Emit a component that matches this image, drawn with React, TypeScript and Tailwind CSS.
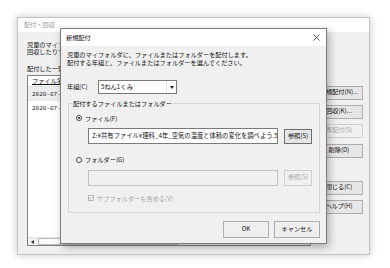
const jp = "font-['Noto_Sans_CJK_JP',sans-serif]";

function WinButton({ label, disabled = false, className = "" }: { label: string; disabled?: boolean; className?: string }) {
  return (
    <div
      className={`flex items-center justify-center whitespace-nowrap border text-[6.2px] leading-none ${
        disabled ? "border-[#cfcfcf] bg-[#f0f0f0] text-[#a8a8a8]" : "border-[#adadad] bg-[#e6e6e6] text-[#111]"
      } ${className}`}
    >
      {label}
    </div>
  );
}

function Radio({ checked, label }: { checked: boolean; label: string }) {
  return (
    <div className="flex h-[7.5px] items-center gap-[3px]">
      <span className="flex h-[6px] w-[6px] items-center justify-center rounded-full border border-[#444] bg-white">
        {checked && <span className="h-[2px] w-[2px] rounded-full bg-[#111]" />}
      </span>
      <span className="text-[6.2px] leading-[7.5px] text-[#111]">{label}</span>
    </div>
  );
}

function ParentWindow() {
  const buttons: { label: string; disabled?: boolean; gap?: string }[] = [
    { label: "新規配付(N)..." },
    { label: "回収(K)...", gap: "mt-[5px]" },
    { label: "再配付(S)", disabled: true, gap: "mt-[5px]" },
    { label: "削除(D)", gap: "mt-[6px]" },
    { label: "閉じる(C)", gap: "mt-[23px]" },
    { label: "ヘルプ(H)", gap: "mt-[5px]" },
  ];

  return (
    <div className="absolute left-[17px] top-[17px] flex h-[238px] w-[353px] flex-col border border-[#c4c4c4] bg-[#f0f0f0] shadow-[0_0_8px_rgba(0,0,0,0.22)]">
      <div className="flex h-[14px] items-center bg-white pl-[6px] text-[6.2px] text-[#9a9a9a]">配付・回収</div>
      <div className="flex flex-1 pl-[9px] pr-[6px] pt-[8.5px]">
        <div className="flex w-[284px] flex-col">
          {/* only the part left of the dialog is ever visible */}
          <div className="w-[33px] overflow-hidden text-[6.2px] leading-[7.5px] text-[#111]">
            <div className="whitespace-nowrap">児童のマイフォルダに</div>
            <div className="whitespace-nowrap">回収したりすることが</div>
          </div>
          <div className="mt-[9px] w-[33px] overflow-hidden whitespace-nowrap text-[6.2px] leading-[7.5px] text-[#111]">
            配付した一覧です
          </div>
          <div className="mt-[3px] flex h-[171px] flex-col border border-[#828282] bg-white">
            <div className="flex h-[11px] items-center border-b border-[#e0e0e0] pl-[4px] text-[6.2px] text-[#111]">
              <span className="w-[28px] overflow-hidden whitespace-nowrap border-b border-[#111] leading-[7px]">ファイル名前</span>
            </div>
            <div className="flex h-[14px] items-center bg-[#ededed] pl-[4px] font-['Liberation_Mono',monospace] text-[6px] text-[#222]">
              <span className="w-[28px] overflow-hidden whitespace-nowrap">2020-07-01</span>
            </div>
            <div className="flex h-[14px] items-center pl-[4px] font-['Liberation_Mono',monospace] text-[6px] text-[#222]">
              <span className="w-[28px] overflow-hidden whitespace-nowrap">2020-07-01</span>
            </div>
            <div className="flex-1" />
            <div className="flex h-[8px] items-center border-t border-[#e6e6e6] bg-[#f0f0f0]">
              <div className="flex h-[8px] w-[9px] items-center justify-center">
                <span className="h-0 w-0 border-y-[2px] border-r-[3px] border-y-transparent border-r-[#333]" />
              </div>
              <div className="ml-[1px] h-[7px] w-[140px] border border-[#bdbdbd] bg-[#fafafa]" />
            </div>
          </div>
        </div>
        <div className="ml-[4px] flex w-[48px] flex-col pt-[45px]">
          {buttons.map((b) => (
            <WinButton key={b.label} label={b.label} disabled={b.disabled} className={`h-[14px] ${b.gap ?? ""}`} />
          ))}
        </div>
      </div>
    </div>
  );
}

function NewDialog() {
  return (
    <div className="absolute left-[60px] top-[28px] flex h-[216px] w-[267px] flex-col overflow-hidden border border-[#7c7c7c] bg-[#f0f0f0] shadow-[2px_3px_8px_rgba(0,0,0,0.3)]">
      <div className="flex h-[17px] items-center justify-between bg-white pl-[5px] pr-[5px]">
        <span className="text-[6.2px] text-[#111]">新規配付</span>
        <svg width="7" height="7" viewBox="0 0 7 7" className="mr-[1px]">
          <path d="M0.5 0.5L6.5 6.5M6.5 0.5L0.5 6.5" stroke="#333" strokeWidth="0.8" />
        </svg>
      </div>

      <div className="flex flex-col pt-[5px]">
        <div className="pl-[6px] text-[6.2px] leading-[7.5px] text-[#111]">
          <div className="whitespace-nowrap">児童のマイフォルダに、ファイルまたはフォルダーを配付します。</div>
          <div className="whitespace-nowrap">配付する年組と、ファイルまたはフォルダーを選んでください。</div>
        </div>

        <div className="mt-[14px] flex h-[14px] items-center pl-[6px]">
          <span className="w-[31px] text-[6.2px] text-[#111]">年組(C)</span>
          <div className="flex h-[14px] w-[79px] items-center border border-[#7a7a7a] bg-white">
            <span className="flex-1 pl-[2px] text-[6.2px] text-[#111]">5ねん1くみ</span>
            <div className="flex h-full w-[10px] items-center justify-center border-l border-[#e2e2e2]">
              <span className="h-0 w-0 border-x-[2px] border-t-[3px] border-x-transparent border-t-[#222]" />
            </div>
          </div>
        </div>

        <div className="ml-[7px] mt-[9px] flex w-[252px] flex-col border border-[#d5d5d5] pb-[10px]">
          <div className="-mt-[4px] ml-[3px] w-fit bg-[#f0f0f0] px-[1px] text-[6.2px] leading-[7.5px] text-[#111]">
            配付するファイルまたはフォルダー
          </div>

          <div className="mt-[7px] pl-[7px]">
            <Radio checked label="ファイル(F)" />
          </div>
          <div className="mt-[6px] flex h-[16px] items-center pl-[19px]">
            <div className="flex h-[16px] w-[190px] items-center overflow-hidden whitespace-nowrap border border-[#7a7a7a] bg-white pl-[3px] text-[6.3px] text-[#111]">
              Z:¥共有ファイル¥理科_4年_空気の温度と体積の変化を調べよう.5
            </div>
            <WinButton label="参照(S)" className="ml-[6px] h-[15px] w-[28px] !border-[#6e6e6e]" />
          </div>

          <div className="mt-[12px] pl-[7px]">
            <Radio checked={false} label="フォルダー(G)" />
          </div>
          <div className="mt-[6px] flex h-[16px] items-center pl-[19px]">
            <div className="h-[16px] w-[190px] border border-[#c2c2c2] bg-[#f0f0f0]" />
            <WinButton label="参照(S)" disabled className="ml-[6px] h-[16px] w-[28px]" />
          </div>

          <div className="mt-[9px] flex h-[7.5px] items-center gap-[3px] pl-[19px]">
            <span className="flex h-[6px] w-[6px] items-center justify-center border border-[#b5b5b5] bg-[#f4f4f4]">
              <svg width="4" height="4" viewBox="0 0 4 4">
                <path d="M0.4 2L1.5 3.1L3.6 0.8" stroke="#9a9a9a" strokeWidth="0.7" fill="none" />
              </svg>
            </span>
            <span className="text-[6.2px] leading-[7.5px] text-[#a8a8a8]">サブフォルダーも含める(V)</span>
          </div>
        </div>

        <div className="mt-[8px] flex justify-end gap-[5px] pr-[6px]">
          <WinButton label="OK" className="h-[17px] w-[46px] bg-[#efefef]" />
          <WinButton label="キャンセル" className="h-[17px] w-[46px] bg-[#efefef]" />
        </div>
      </div>
    </div>
  );
}

export default function App() {
  return (
    <div className={`relative h-[268px] w-[390px] overflow-hidden bg-white ${jp}`}>
      <ParentWindow />
      <NewDialog />
    </div>
  );
}
